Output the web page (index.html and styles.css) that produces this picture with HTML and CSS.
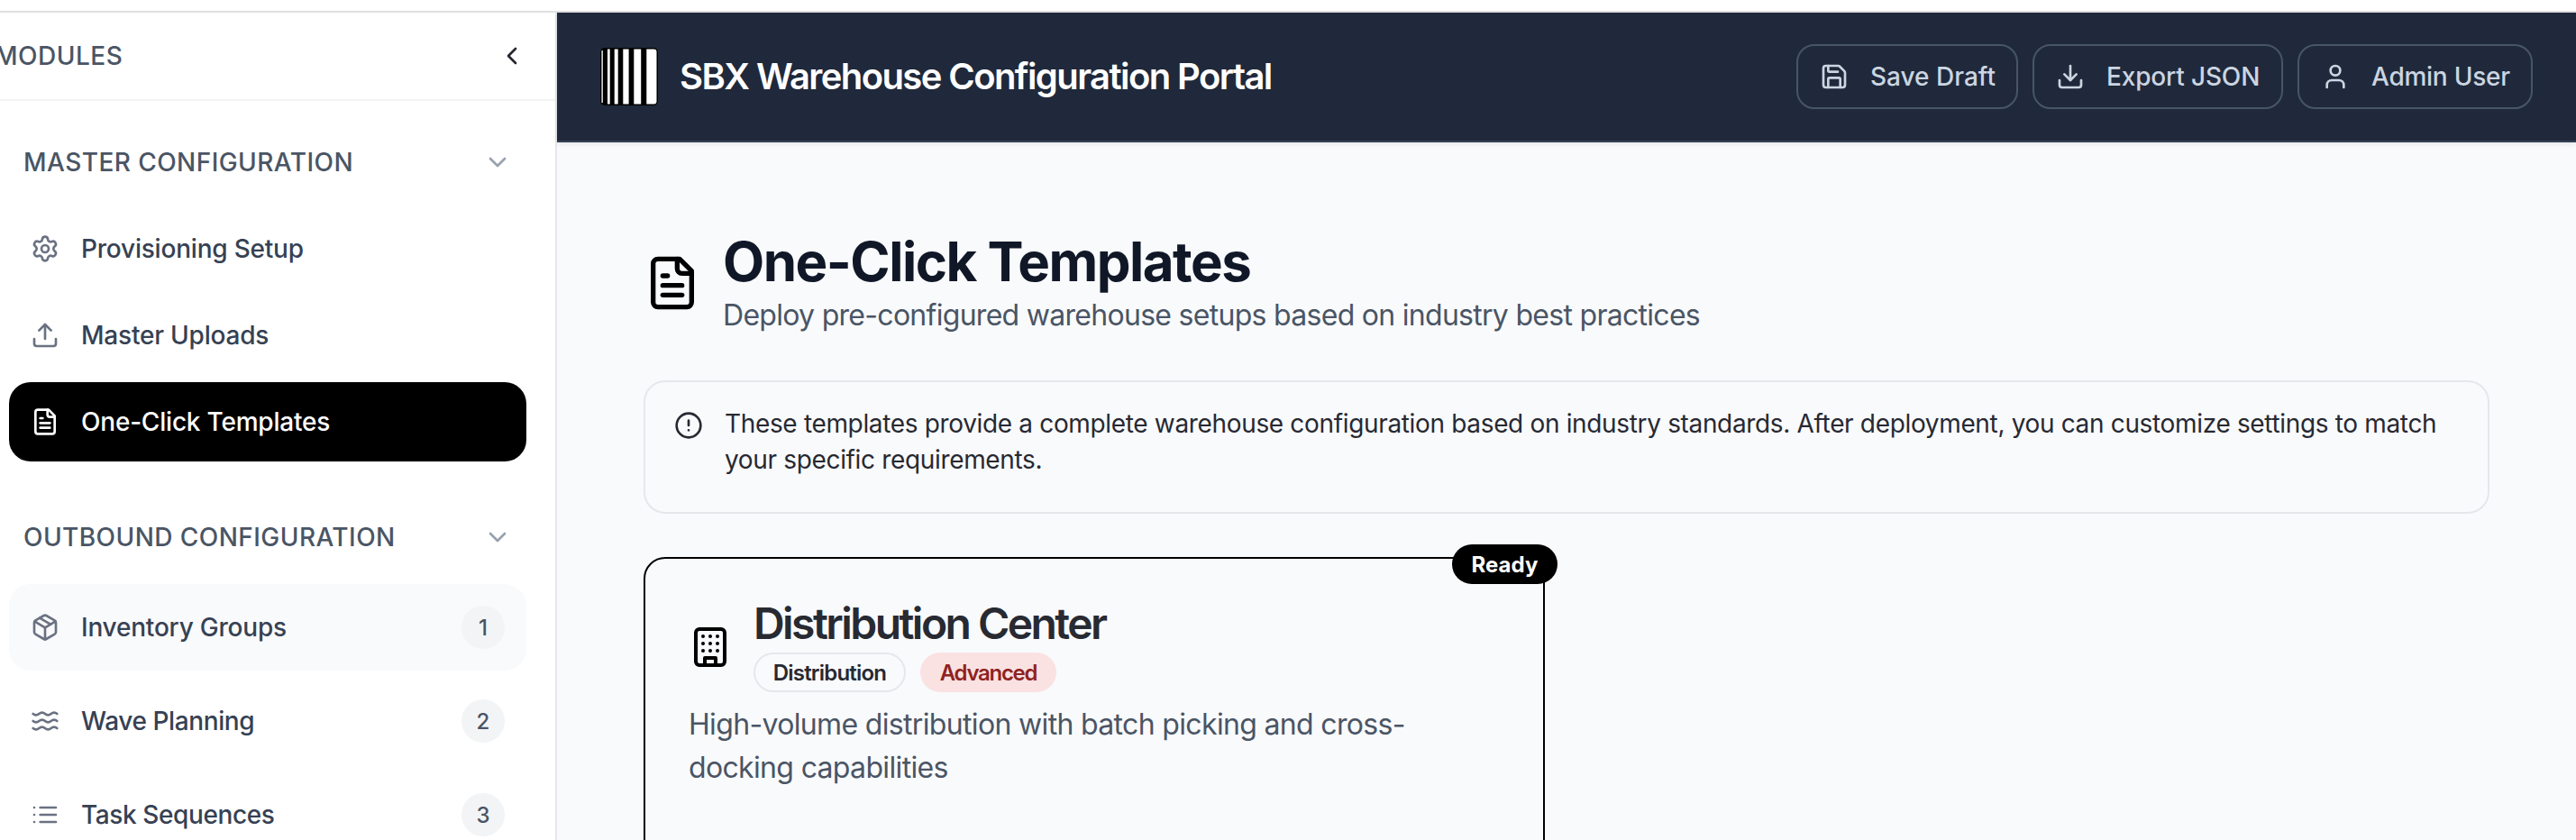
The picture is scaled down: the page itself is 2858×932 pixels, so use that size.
FILE: index.html
```html
<!DOCTYPE html>
<html lang="en">
<head>
<meta charset="utf-8">
<title>SBX Warehouse Configuration Portal</title>
<link rel="stylesheet" href="styles.css">
</head>
<body>
<div class="app">
  <aside class="sidebar">
    <div class="sidebar-head">
      <span class="sidebar-title">MODULES</span>
      <svg class="icon" viewBox="0 0 24 24"><path d="m15 18-6-6 6-6"/></svg>
    </div>
    <nav class="nav">
      <section class="nav-group">
        <div class="nav-heading">
          <span>MASTER CONFIGURATION</span>
          <svg class="icon" viewBox="0 0 24 24"><path d="m6 9 6 6 6-6"/></svg>
        </div>
        <a class="nav-item">
          <svg class="icon" viewBox="0 0 24 24"><path d="M9.671 4.136a2.34 2.34 0 0 1 4.659 0 2.34 2.34 0 0 0 3.319 1.915 2.34 2.34 0 0 1 2.33 4.033 2.34 2.34 0 0 0 0 3.831 2.34 2.34 0 0 1-2.33 4.033 2.34 2.34 0 0 0-3.319 1.915 2.34 2.34 0 0 1-4.659 0 2.34 2.34 0 0 0-3.32-1.915 2.34 2.34 0 0 1-2.33-4.033 2.34 2.34 0 0 0 0-3.831A2.34 2.34 0 0 1 6.35 6.051a2.34 2.34 0 0 0 3.319-1.915"/><circle cx="12" cy="12" r="3"/></svg>
          <span class="nav-label">Provisioning Setup</span>
        </a>
        <a class="nav-item">
          <svg class="icon" viewBox="0 0 24 24"><path d="M21 15v4a2 2 0 0 1-2 2H5a2 2 0 0 1-2-2v-4"/><path d="m17 8-5-5-5 5"/><path d="M12 3v12"/></svg>
          <span class="nav-label">Master Uploads</span>
        </a>
        <a class="nav-item active">
          <svg class="icon" viewBox="0 0 24 24"><path d="M15 2H6a2 2 0 0 0-2 2v16a2 2 0 0 0 2 2h12a2 2 0 0 0 2-2V7Z"/><path d="M14 2v4a2 2 0 0 0 2 2h4"/><path d="M10 9H8"/><path d="M16 13H8"/><path d="M16 17H8"/></svg>
          <span class="nav-label">One-Click Templates</span>
        </a>
      </section>
      <section class="nav-group">
        <div class="nav-heading">
          <span>OUTBOUND CONFIGURATION</span>
          <svg class="icon" viewBox="0 0 24 24"><path d="m6 9 6 6 6-6"/></svg>
        </div>
        <a class="nav-item hover">
          <svg class="icon" viewBox="0 0 24 24"><path d="M11 21.73a2 2 0 0 0 2 0l7-4A2 2 0 0 0 21 16V8a2 2 0 0 0-1-1.73l-7-4a2 2 0 0 0-2 0l-7 4A2 2 0 0 0 3 8v8a2 2 0 0 0 1 1.73z"/><path d="M12 22V12"/><path d="m3.3 7 7.703 4.734a2 2 0 0 0 1.994 0L20.7 7"/><path d="m7.5 4.27 9 5.15"/></svg>
          <span class="nav-label">Inventory Groups</span>
          <span class="count">1</span>
        </a>
        <a class="nav-item">
          <svg class="icon" viewBox="0 0 24 24"><path d="M2 6c.6.5 1.2 1 2.5 1C7 7 7 5 9.500 5c2.600 0 2.400 2 5 2 2.500 0 2.500-2 5-2 1.300 0 1.900.5 2.500 1"/><path d="M2 12c.6.5 1.200 1 2.500 1 2.500 0 2.500-2 5-2 2.600 0 2.400 2 5 2 2.500 0 2.500-2 5-2 1.300 0 1.900.5 2.500 1"/><path d="M2 18c.6.5 1.200 1 2.500 1 2.500 0 2.500-2 5-2 2.600 0 2.400 2 5 2 2.500 0 2.500-2 5-2 1.300 0 1.900.5 2.500 1"/></svg>
          <span class="nav-label tight">Wave Planning</span>
          <span class="count">2</span>
        </a>
        <a class="nav-item">
          <svg class="icon" viewBox="0 0 24 24"><path d="M3 6h.01M3 12h.01M3 18h.01M8 6h13M8 12h13M8 18h13"/></svg>
          <span class="nav-label tight">Task Sequences</span>
          <span class="count">3</span>
        </a>
      </section>
    </nav>
  </aside>

  <div class="content">
    <header class="topbar">
      <div class="brand">
        <svg class="logo" viewBox="0 0 64 64">
          <rect width="64" height="64" rx="5" fill="#000"/>
          <path fill="#c9c9c9" d="M1.300 3h1.700v58H1.300z"/>
          <path fill="#fff" d="M8 1.500h2.700v61H8zM15.700 1.500h4v61h-4zM25.300 1.500h6.300v61h-6.300zM37.300 1.500h7.900v61h-7.900zM51.300 1.500H59.500a3 3 0 0 1 3 3v55a3 3 0 0 1-3 3H51.300z"/>
        </svg>
        <h1 class="brand-name">SBX Warehouse Configuration Portal</h1>
      </div>
      <div class="actions">
        <button class="btn">
          <svg class="icon" viewBox="0 0 24 24"><path d="M15.200 3a2 2 0 0 1 1.400.6l3.800 3.800a2 2 0 0 1 .6 1.400V19a2 2 0 0 1-2 2H5a2 2 0 0 1-2-2V5a2 2 0 0 1 2-2z"/><path d="M17 21v-7a1 1 0 0 0-1-1H8a1 1 0 0 0-1 1v7"/><path d="M7 3v4a1 1 0 0 0 1 1h7"/></svg>
          <span>Save Draft</span>
        </button>
        <button class="btn export">
          <svg class="icon" viewBox="0 0 24 24"><path d="M21 15v4a2 2 0 0 1-2 2H5a2 2 0 0 1-2-2v-4"/><path d="m7 10 5 5 5-5"/><path d="M12 15V3"/></svg>
          <span>Export JSON</span>
        </button>
        <button class="btn user">
          <svg class="icon" viewBox="0 0 24 24"><path d="M19 21v-2a4 4 0 0 0-4-4H9a4 4 0 0 0-4 4v2"/><circle cx="12" cy="7" r="4"/></svg>
          <span>Admin User</span>
        </button>
      </div>
    </header>

    <main class="page">
      <div class="page-head">
        <svg class="icon page-icon" viewBox="0 0 24 24"><path d="M15 2H6a2 2 0 0 0-2 2v16a2 2 0 0 0 2 2h12a2 2 0 0 0 2-2V7Z"/><path d="M14 2v4a2 2 0 0 0 2 2h4"/><path d="M10 9H8"/><path d="M16 13H8"/><path d="M16 17H8"/></svg>
        <div>
          <h2 class="page-title">One-Click Templates</h2>
          <p class="page-sub">Deploy pre-configured warehouse setups based on industry best practices</p>
        </div>
      </div>

      <div class="alert">
        <svg class="icon" viewBox="0 0 24 24"><circle cx="12" cy="12" r="10"/><path d="M12 8v4M12 16h.01"/></svg>
        <p class="alert-text">These templates provide a complete warehouse configuration based on industry standards. After deployment, you can customize settings to match your specific requirements.</p>
      </div>

      <div class="cards">
        <article class="card">
          <span class="ready">Ready</span>
          <div class="card-head">
            <svg class="icon card-icon" viewBox="0 0 24 24"><rect x="4" y="2" width="16" height="20" rx="2"/><path d="M9 22v-4h6v4M8 6h.01M16 6h.01M12 6h.01M12 10h.01M12 14h.01M16 10h.01M16 14h.01M8 10h.01M8 14h.01"/></svg>
            <div>
              <h3 class="card-title">Distribution Center</h3>
              <div class="tags">
                <span class="tag">Distribution</span>
                <span class="tag advanced">Advanced</span>
              </div>
            </div>
          </div>
          <p class="card-desc">High-volume distribution with batch picking and cross-docking capabilities</p>
        </article>
      </div>
    </main>
  </div>
</div>
</body>
</html>
```
FILE: styles.css
```css
* { box-sizing: border-box; margin: 0; padding: 0; }

body {
  height: 932px;
  overflow: hidden;
  padding-top: 12px;
  background: #fff;
  font-family: Inter, "Liberation Sans", sans-serif;
  -webkit-font-smoothing: antialiased;
}

.app {
  display: flex;
  height: 920px;
  border-top: 2px solid #e0e0e0;
  overflow: hidden;
}

.icon {
  width: 32px;
  height: 32px;
  flex: none;
  fill: none;
  stroke: currentColor;
  stroke-width: 2;
  stroke-linecap: round;
  stroke-linejoin: round;
}

/* Sidebar */
.sidebar {
  width: 618px;
  flex: none;
  overflow: hidden;
  border-right: 2px solid #e5e7eb;
  background: #fff;
}

.sidebar-head {
  display: flex;
  align-items: center;
  justify-content: space-between;
  height: 98px;
  padding-right: 32px;
  border-bottom: 2px solid #f3f4f6;
  color: #25272f;
}

.sidebar-title {
  margin-left: -6px;
  color: #4a5565;
  font-size: 28px;
  font-weight: 500;
  letter-spacing: 0.5px;
}

.nav {
  display: flex;
  flex-direction: column;
  gap: 40px;
  padding: 24px 32px 0 10px;
}

.nav-group {
  display: flex;
  flex-direction: column;
  gap: 8px;
}

.nav-heading {
  display: flex;
  align-items: center;
  justify-content: space-between;
  height: 88px;
  padding: 0 16px;
  color: #4a5565;
  font-size: 28px;
  font-weight: 500;
  letter-spacing: 0.44px;
}

.nav-heading .icon { color: #99a1af; }

.nav-item {
  display: flex;
  align-items: center;
  gap: 24px;
  min-height: 88px;
  padding: 24px;
  border-radius: 24px;
  color: #364153;
  font-size: 28px;
  font-weight: 500;
  letter-spacing: -0.21px;
}

.nav-item .icon { color: #6a7282; }
.nav-item.hover { background: #f9fafb; }
.nav-item.active { background: #000; color: #fff; }
.nav-item.active .icon { color: #fff; }
.nav-label { flex: 1; line-height: 40px; }
.nav-label.tight { letter-spacing: -0.4px; }

.count {
  display: flex;
  align-items: center;
  justify-content: center;
  width: 48px;
  height: 48px;
  border-radius: 50%;
  background: #f3f4f6;
  color: #4a5565;
  font-size: 24px;
  letter-spacing: 0;
}

/* Header */
.content {
  flex: 1;
  min-width: 0;
  background: #f9fafc;
}

.topbar {
  display: flex;
  align-items: center;
  justify-content: space-between;
  height: 144px;
  padding: 0 48px;
  border-bottom: 2px solid #334155;
  background: #1f293b;
  box-shadow: 0 2px 6px rgba(0, 0, 0, 0.08);
}

.brand { display: flex; align-items: center; gap: 24px; }
.logo { width: 64px; height: 64px; }

.brand-name {
  color: #fff;
  font-size: 40px;
  font-weight: 600;
  line-height: 56px;
  letter-spacing: -1.59px;
}

.actions { display: flex; gap: 16px; }

.btn {
  display: flex;
  align-items: center;
  gap: 24px;
  width: 246px;
  height: 72px;
  padding: 0 24px;
  border: 2px solid #475569;
  border-radius: 20px;
  background: transparent;
  color: #cbd5e1;
  font-family: inherit;
  font-size: 28px;
  font-weight: 500;
  white-space: nowrap;
}

.btn.export { width: 278px; letter-spacing: -0.15px; }
.btn.user { width: 261px; letter-spacing: -0.25px; }

/* Page */
.page { padding: 96px; }

.page-head {
  display: flex;
  align-items: center;
  gap: 24px;
  margin-bottom: 48px;
}

.page-icon { width: 64px; height: 64px; color: #000; }

.page-title {
  color: #101828;
  font-size: 60px;
  font-weight: 700;
  line-height: 72px;
  letter-spacing: -1.52px;
}

.page-sub {
  color: #4a5565;
  font-size: 32px;
  line-height: 48px;
  letter-spacing: -0.71px;
}

.alert {
  display: flex;
  gap: 24px;
  height: 148px;
  margin-bottom: 48px;
  padding: 26px 32px;
  border: 2px solid #e5e7eb;
  border-radius: 24px;
  color: #272932;
}

.alert .icon { margin-top: 6px; }

.alert-text {
  flex: 1;
  font-size: 28px;
  line-height: 40px;
  letter-spacing: -0.34px;
}

.cards {
  display: grid;
  grid-template-columns: 1fr 1fr;
  gap: 48px;
}

.card {
  position: relative;
  height: 480px;
  padding: 48px;
  border: 2px solid #000;
  border-radius: 24px;
}

.ready {
  position: absolute;
  top: -16px;
  right: -16px;
  display: flex;
  align-items: center;
  justify-content: center;
  width: 117px;
  height: 44px;
  border-radius: 22px;
  background: #000;
  color: #fff;
  font-size: 24px;
  font-weight: 700;
}

.card-head {
  display: flex;
  align-items: center;
  gap: 24px;
  margin-bottom: 12px;
}

.card-icon { width: 48px; height: 48px; color: #000; }

.card-title {
  margin-bottom: 8px;
  color: #282a32;
  font-size: 48px;
  font-weight: 600;
  line-height: 48px;
  letter-spacing: -2.56px;
}

.tags { display: flex; gap: 16px; }

.tag {
  display: flex;
  align-items: center;
  justify-content: center;
  width: 169px;
  height: 44px;
  border: 2px solid #e5e7eb;
  border-radius: 22px;
  color: #272932;
  font-size: 24px;
  font-weight: 600;
  letter-spacing: -0.8px;
}

.tag.advanced {
  width: 151px;
  border-color: transparent;
  background: #fae2e2;
  color: #8f231f;
  letter-spacing: -1.3px;
}

.card-desc {
  color: #4a5565;
  font-size: 32px;
  line-height: 48px;
  letter-spacing: -0.66px;
}
```
